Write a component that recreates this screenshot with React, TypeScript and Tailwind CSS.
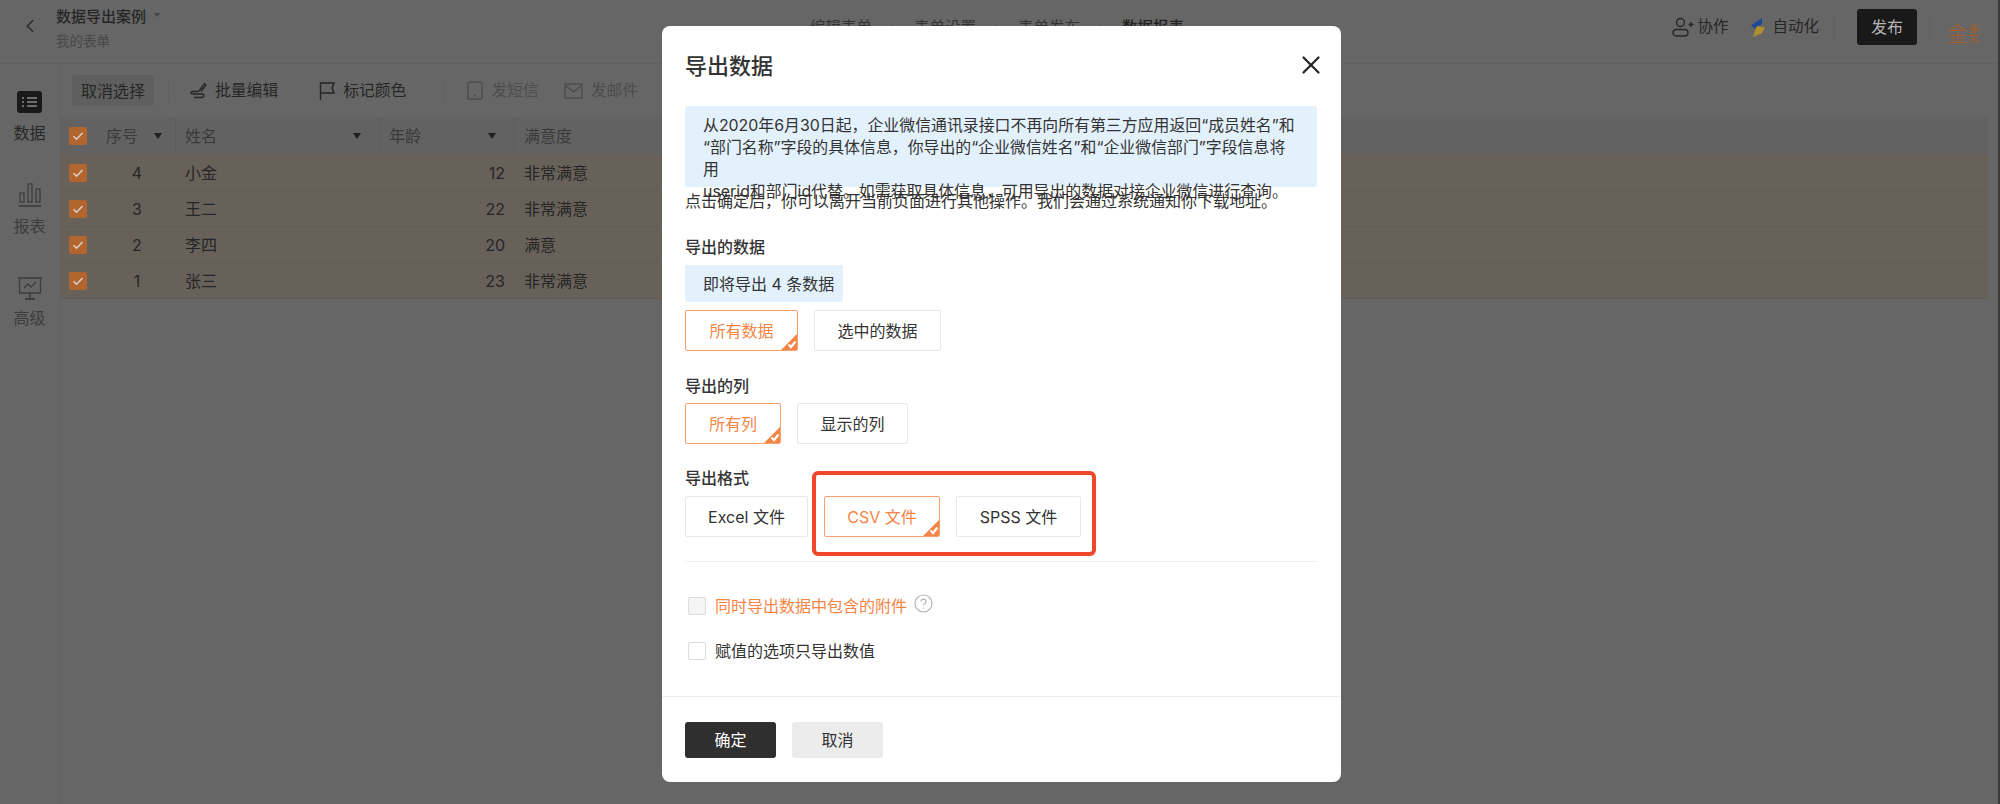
import type { ReactNode } from 'react'
import { ChevronLeft, X } from 'lucide-react'

const rows = [
  { id: 4, name: '小金', age: 12, level: '非常满意' },
  { id: 3, name: '王二', age: 22, level: '非常满意' },
  { id: 2, name: '李四', age: 20, level: '满意' },
  { id: 1, name: '张三', age: 23, level: '非常满意' },
]

function Caret() {
  return <span className="h-0 w-0 border-x-[4px] border-t-[6px] border-x-transparent border-t-[#1f1f1f]" />
}

function DimCheck() {
  return (
    <span className="flex h-[18px] w-[18px] items-center justify-center rounded-[2px] bg-[#b3652f]">
      <svg width="12" height="12" viewBox="0 0 12 12" fill="none" stroke="#d9d2cb" strokeWidth="1.6">
        <path d="M1.5 6.2 4.6 9.2 10.5 3" />
      </svg>
    </span>
  )
}

function Option({ label, width, active }: { label: string; width: string; active?: boolean }) {
  return (
    <button
      className={`relative h-[41px] shrink-0 overflow-hidden rounded-[2px] border text-[16px] ${width} ${
        active ? 'border-[#f6a06f] text-[#f58445]' : 'border-[#e9e9e9] text-[#333]'
      }`}
    >
      {label}
      {active && (
        <svg className="absolute bottom-0 right-0" width="16" height="16" viewBox="0 0 16 16">
          <path d="M16 0V16H0Z" fill="#f58445" />
          <path d="M7.5 10.5 10 13 14.500 7.500" fill="none" stroke="#fff" strokeWidth="2.200" />
        </svg>
      )}
    </button>
  )
}

function Tool({ icon, label, muted }: { icon: ReactNode; label: string; muted?: boolean }) {
  return (
    <div className={`flex items-center gap-2 text-[15.8px] ${muted ? 'text-[#4d4d4d]' : 'text-[#262626]'}`}>
      {icon}
      <span>{label}</span>
    </div>
  )
}

export default function App() {
  return (
    <div className="relative flex h-[804px] w-[2000px] flex-col overflow-hidden bg-[#666666] font-['Inter','Noto_Sans_CJK_SC',sans-serif] text-[#262626]">
      {/* Top bar */}
      <header className="flex h-[64px] shrink-0 items-start border-b border-[#606060]">
        <ChevronLeft className="ml-[19px] mt-[15px]" size={22} strokeWidth={1.5} color="#2a2a2a" />
        <div className="ml-[15px] mt-[6px] w-[754px]">
          <div className="flex items-center gap-2 text-[15px] font-medium leading-[22px] text-[#262626]">
            数据导出案例
            <span className="mb-1 h-0 w-0 border-x-[3px] border-t-[4px] border-x-transparent border-t-[#444]" />
          </div>
          <div className="mt-[3px] text-[13.5px] leading-[20px] text-[#484848]">我的表单</div>
        </div>
        <nav className="mt-[16px] flex items-center text-[15.5px] leading-[24px] text-[#333]">
          <span>编辑表单</span>
          <span className="mx-[18px] text-[#555]">›</span>
          <span>表单设置</span>
          <span className="mx-[18px] text-[#555]">›</span>
          <span>表单发布</span>
          <span className="mx-[18px] text-[#555]">›</span>
          <span className="font-medium text-[#222]">数据报表</span>
        </nav>
        <div className="ml-auto flex h-[54px] items-center pr-[20px]">
          <svg width="22" height="20" viewBox="0 0 22 20" fill="none" stroke="#262626" strokeWidth="1.4" className="mr-[3px]">
            <circle cx="8.5" cy="5.5" r="4" />
            <rect x="1" y="12.5" width="15" height="6.5" rx="3.2" />
            <path d="M16.5 7.5h5M19 5v5" />
          </svg>
          <span className="text-[15.5px]">协作</span>
          <svg width="16" height="19" viewBox="0 0 16 19" className="ml-[22px] mr-[6px]">
            <path d="M12 0 1 7.5 5 10.5 12 6Z" fill="#1d4a94" />
            <path d="M7 8 15 9.5 12 15 3 19 5 13Z" fill="#b2902d" />
          </svg>
          <span className="text-[15.5px]">自动化</span>
          <span className="ml-[15px] h-[22px] w-px bg-[#5f5f5f]" />
          <button className="ml-[22px] h-[36px] w-[60px] rounded-[3px] bg-[#191919] text-[16px] text-[#b5b5b5]">发布</button>
          <span className="ml-[12px] h-[22px] w-px bg-[#5f5f5f]" />
          <span className="ml-[17px] mt-[13px] h-[24px] w-[33px] overflow-hidden whitespace-nowrap text-[21px] font-light leading-[24px] text-[#a85f2c]">
            金数
          </span>
        </div>
      </header>

      <div className="flex min-h-0 flex-1">
        {/* Left rail */}
        <aside className="flex w-[61px] shrink-0 flex-col items-center border-r border-[#606060] pr-px pt-[27px] text-[16px] leading-[24px]">
          <svg width="25" height="22" viewBox="0 0 25 22">
            <rect width="25" height="22" rx="3" fill="#191919" />
            <path d="M5 7h2M10 7h10M5 11h2M10 11h10M5 15h2M10 15h10" stroke="#8a8a8a" strokeWidth="1.6" />
          </svg>
          <span className="mt-[8px] text-[#262626]">数据</span>
          <svg className="mt-[38px]" width="24" height="24" viewBox="0 0 24 24" fill="none" stroke="#3d3d3d" strokeWidth="1.3">
            <rect x="2" y="10" width="4" height="9" />
            <rect x="10" y="1" width="4" height="18" />
            <rect x="18" y="6" width="4" height="13" />
            <path d="M1 23h22" strokeWidth="1.6" />
          </svg>
          <span className="mt-[7px] text-[#3d3d3d]">报表</span>
          <svg className="mt-[39px]" width="26" height="23" viewBox="0 0 26 23" fill="none" stroke="#3d3d3d" strokeWidth="1.3">
            <path d="M1 1h24M2.5 1v15h21V1" />
            <path d="M7 11l4-4 3 3 5-5" />
            <path d="M13 16v5M8 22h10" strokeWidth="1.8" />
          </svg>
          <span className="mt-[6px] text-[#3d3d3d]">高级</span>
        </aside>

        <main className="flex min-w-0 flex-1 flex-col pr-[12px]">
          {/* Selection toolbar */}
          <div className="flex h-[53px] shrink-0 items-center pl-[11px]">
            <button className="h-[31px] w-[82px] rounded-[3px] bg-[#5f5f5f] text-[16px] text-[#262626]">取消选择</button>
            <span className="ml-[14px] mr-[21px] h-[20px] w-px bg-[#5f5f5f]" />
            <Tool
              label="批量编辑"
              icon={
                <svg width="17" height="17" viewBox="0 0 17 17" fill="none" stroke="#262626" strokeWidth="1.4">
                  <path d="M9 9 14.5 1.5 16 3 11 9.5" />
                  <path d="M9 9.5H3C.5 9.5.5 12 3 12h9c2.500 0 2.500 3.500 0 3.500H4" />
                </svg>
              }
            />
            <div className="w-[41px]" />
            <Tool
              label="标记颜色"
              icon={
                <svg width="16" height="20" viewBox="0 0 16 20" fill="none" stroke="#262626" strokeWidth="1.4">
                  <path d="M1.500 19V2h13.500l-2 5 2 5H1.500" />
                </svg>
              }
            />
            <span className="ml-[38px] mr-[22px] h-[20px] w-px bg-[#5f5f5f]" />
            <Tool
              muted
              label="发短信"
              icon={
                <svg width="16" height="19" viewBox="0 0 16 19" fill="none" stroke="#4d4d4d" strokeWidth="1.4">
                  <rect x="1" y="1" width="14" height="17" rx="2" />
                  <path d="M7 14.500h2" strokeWidth="1.800" />
                </svg>
              }
            />
            <div className="w-[25px]" />
            <Tool
              muted
              label="发邮件"
              icon={
                <svg width="19" height="16" viewBox="0 0 19 16" fill="none" stroke="#4d4d4d" strokeWidth="1.4">
                  <rect x="1" y="1" width="17" height="14" />
                  <path d="M1 2l8.500 7L18 2" />
                </svg>
              }
            />
          </div>

          {/* Table */}
          <div className="flex h-[38px] shrink-0 items-center bg-[#626262] text-[16px] text-[#3a3a3a]">
            <div className="flex w-[34px] shrink-0 justify-end pr-[8px]">
              <DimCheck />
            </div>
            <div className="flex w-[80px] shrink-0 items-center justify-between pl-[11px] pr-[13px]">
              序号
              <Caret />
            </div>
            <div className="flex h-full w-[204px] shrink-0 items-center justify-between border-l border-[#5d5d5d] pl-[9px] pr-[18px]">
              姓名
              <Caret />
            </div>
            <div className="flex h-full w-[134px] shrink-0 items-center justify-between border-l border-[#5d5d5d] pl-[9px] pr-[17px]">
              年龄
              <Caret />
            </div>
            <div className="flex h-full flex-1 items-center border-l border-[#5d5d5d] pl-[10px]">满意度</div>
          </div>
          {rows.map(r => (
            <div key={r.id} className="flex h-[36px] shrink-0 items-center border-b border-[#605c57] bg-[#67615a] text-[16px]">
              <div className="flex w-[34px] shrink-0 justify-end pr-[8px]">
                <DimCheck />
              </div>
              <div className="w-[80px] shrink-0 pl-[4px] text-center">{r.id}</div>
              <div className="w-[204px] shrink-0 pl-[10px]">{r.name}</div>
              <div className="w-[134px] shrink-0 pr-[8px] text-right">{r.age}</div>
              <div className="flex-1 pl-[11px]">{r.level}</div>
            </div>
          ))}
        </main>
      </div>

      {/* Export dialog */}
      <div className="absolute left-[662px] top-[26px] flex h-[756px] w-[679px] flex-col rounded-[8px] bg-white text-[16px] text-[#333]">
        <div className="flex-1 pl-[23px] pr-[24px]">
          <div className="flex h-[80px] items-center justify-between">
            <h2 className="text-[22px] font-medium text-[#333]">导出数据</h2>
            <X className="mr-[-9px] mt-[-3px]" size={30} strokeWidth={1.8} color="#262626" />
          </div>
          <div className="h-[81px] rounded-[3px] bg-[#e3f1fc] px-[18px] py-[9px] text-[15.9px] leading-[22px]">
            从2020年6月30日起，企业微信通讯录接口不再向所有第三方应用返回“成员姓名”和
            <br />
            “部门名称”字段的具体信息，你导出的“企业微信姓名”和“企业微信部门”字段信息将用
            <br />
            userid和部门id代替。如需获取具体信息，可用导出的数据对接企业微信进行查询。
          </div>
          <p className="mt-[2px] leading-[24px]">点击确定后，你可以离开当前页面进行其他操作。我们会通过系统通知你下载地址。</p>

          <h3 className="mt-[22px] font-medium leading-[24px]">导出的数据</h3>
          <div className="mt-[6px] flex h-[37px] w-[158px] items-center rounded-[3px] bg-[#e3f1fc] pl-[18px]">即将导出 4 条数据</div>
          <div className="mt-[8px] flex gap-[16px]">
            <Option label="所有数据" width="w-[113px]" active />
            <Option label="选中的数据" width="w-[127px]" />
          </div>

          <h3 className="mt-[23px] font-medium leading-[24px]">导出的列</h3>
          <div className="mt-[5px] flex gap-[16px]">
            <Option label="所有列" width="w-[96px]" active />
            <Option label="显示的列" width="w-[111px]" />
          </div>

          <h3 className="mt-[22px] font-medium leading-[24px]">导出格式</h3>
          <div className="mt-[6px] flex gap-[16px]">
            <Option label="Excel 文件" width="w-[123px]" />
            <Option label="CSV 文件" width="w-[116px]" active />
            <Option label="SPSS 文件" width="w-[125px]" />
          </div>

          <div className="mt-[24px] border-t border-[#eeeeee]" />
          <label className="mt-[32px] flex h-[24px] items-center pl-[3px]">
            <span className="h-[18px] w-[18px] rounded-[2px] border border-[#dcdcdc] bg-[#f5f5f5]" />
            <span className="ml-[9px] text-[#f58445]">同时导出数据中包含的附件</span>
            <svg className="mb-[5px] ml-[7px]" width="19" height="19" viewBox="0 0 19 19" fill="none" stroke="#b5b5b5" strokeWidth="1.200">
              <circle cx="9.500" cy="9.500" r="8.500" />
              <path d="M7 7.500c0-3.200 5-3.200 5 0 0 2-2.500 2-2.500 4" />
              <path d="M9.500 13.500v1.200" />
            </svg>
          </label>
          <label className="mt-[21px] flex h-[24px] items-center pl-[3px]">
            <span className="h-[18px] w-[18px] rounded-[2px] border border-[#dcdcdc] bg-white" />
            <span className="ml-[9px]">赋值的选项只导出数值</span>
          </label>
        </div>
        <div className="flex h-[86px] shrink-0 gap-[16px] border-t border-[#eeeeee] pl-[23px] pt-[25px]">
          <button className="h-[36px] w-[91px] rounded-[3px] bg-[#2f2f2f] text-white">确定</button>
          <button className="h-[36px] w-[91px] rounded-[3px] bg-[#ececec] text-[#333]">取消</button>
        </div>
      </div>

      {/* Red annotation frame */}
      <div className="absolute left-[812px] top-[471px] h-[85px] w-[284px] rounded-[6px] border-[4px] border-[#f1472a]" />

      {/* Window edge */}
      <div className="absolute right-0 top-0 h-full w-[2px] bg-[#3d3a36]" />
    </div>
  )
}
